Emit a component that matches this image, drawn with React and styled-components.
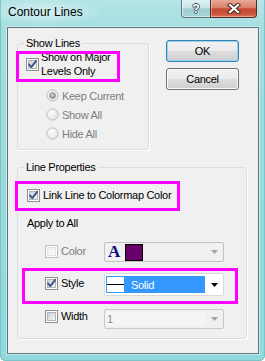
import React, { useId } from 'react';
import styled, { createGlobalStyle, css } from 'styled-components';

const FONT = `"Liberation Sans", Arial, sans-serif`;

const GlobalStyle = createGlobalStyle`
  html, body { margin: 0; padding: 0; background: #ffffff; }
  body { font-family: ${FONT}; font-size: 11px; color: #000; }
`;

const Window = styled.div`
  width: 265px;
  height: 361px;
  box-sizing: border-box;
  display: flex;
  flex-direction: column;
  border-radius: 0 0 6px 6px;
  overflow: hidden;
  background: linear-gradient(180deg, #b4e4e6 0px, #a5dee1 30px, #98dadd 200px, #8fd9dc 100%);
  box-shadow: inset 1px 0 0 #7cc3c7, inset -1px 0 0 #7cc3c7, inset 0 -1px 0 #7cc3c7;
`;

const TitleBar = styled.div`
  height: 27px;
  flex-shrink: 0;
  display: flex;
  align-items: flex-start;
  background: radial-gradient(ellipse 60px 13px at 44px 12px, rgba(255, 255, 255, 0.5), rgba(255, 255, 255, 0) 100%);
`;

const Title = styled.div`
  flex: 1;
  padding: 5px 0 0 8px;
  font-family: ${FONT};
  font-size: 12px;
  line-height: 15px;
  color: #000;
`;

const CaptionButtons = styled.div`
  display: flex;
  margin-right: 8px;
`;

const HelpButton = styled.div`
  width: 29px;
  height: 18px;
  box-sizing: border-box;
  border: 1px solid #58787b;
  border-top: none;
  border-right: none;
  border-radius: 0 0 0 4px;
  background: linear-gradient(180deg, #e0f1f2 0%, #c9e6e8 45%, #9fcfd2 52%, #a9d6d8 100%);
  box-shadow: inset 1px 0 0 rgba(255, 255, 255, 0.6), inset 0 -1px 0 rgba(255, 255, 255, 0.45);
  display: flex;
  align-items: center;
  justify-content: center;
  color: #fff;
  font-family: ${FONT};
  font-weight: bold;
  font-size: 12px;
  line-height: 12px;
  text-shadow: 1px 0 0 #3f5456, -1px 0 0 #3f5456, 0 1px 0 #3f5456, 0 -1px 0 #3f5456;
`;

const CloseButton = styled.div`
  width: 47px;
  height: 18px;
  box-sizing: border-box;
  border: 1px solid #5c2a22;
  border-top: none;
  border-radius: 0 0 4px 0;
  background: linear-gradient(180deg, #e9a998 0%, #d8806c 45%, #c44a34 52%, #c9533b 80%, #d7745a 100%);
  box-shadow: inset 1px 0 0 rgba(255, 255, 255, 0.35), inset 0 -1px 0 rgba(255, 255, 255, 0.35);
  display: flex;
  align-items: center;
  justify-content: center;
`;

const Client = styled.div`
  flex: 1;
  margin: 0 6px 7px 7px;
  border: 1px solid #5d7579;
  background: #f0f0f0;
  box-sizing: border-box;
  padding: 9px 0 0 9px;
  display: flex;
  flex-direction: column;
  box-shadow: 0 0 0 1px rgba(255, 255, 255, 0.45);
`;

const TopRow = styled.div`
  display: flex;
  align-items: flex-start;
`;

const Group = styled.fieldset`
  margin: ${(p) => p.$mt || 0}px 0 0 0;
  padding: 0 0 ${(p) => p.$pb}px 0;
  min-inline-size: 0;
  width: ${(p) => p.$w}px;
  box-sizing: border-box;
  border: 1px solid #d5dfe5;
  border-radius: 3px;
  box-shadow: 1px 1px 0 #ffffff;
  display: flex;
  flex-direction: column;
`;

const Legend = styled.legend`
  margin-left: 6px;
  padding: 0 2px;
  font-size: 11px;
  line-height: 13px;
  letter-spacing: -0.3px;
  color: #000;
`;

/* magenta annotation frame drawn over a row */
const annotation = css`
  position: relative;
  ${(p) =>
    p.$box &&
    css`
      &::after {
        content: '';
        position: absolute;
        top: ${p.$box[0]}px;
        left: ${p.$box[1]}px;
        width: ${p.$box[2]}px;
        height: ${p.$box[3]}px;
        border: 3px solid #ff00ff;
        box-sizing: border-box;
        pointer-events: none;
      }
    `}
`;

const CheckRow = styled.div`
  ${annotation}
  display: flex;
  align-items: center;
  margin-top: ${(p) => p.$mt}px;
  padding-left: ${(p) => p.$pl}px;
  gap: ${(p) => p.$gap}px;
`;

const Text = styled.span`
  font-size: 11px;
  line-height: 14px;
  letter-spacing: -0.3px;
  color: ${(p) => (p.$disabled ? '#7d7d7d' : '#000')};
  max-width: ${(p) => (p.$wrap ? `${p.$wrap}px` : 'none')};
  white-space: ${(p) => (p.$wrap ? 'normal' : 'nowrap')};
`;

const RadioList = styled.div`
  display: flex;
  flex-direction: column;
  margin-top: 8px;
  padding-left: 28px;
`;

const RadioRow = styled.div`
  display: flex;
  align-items: center;
  height: 19px;
  gap: 3px;
`;

const ButtonColumn = styled.div`
  display: flex;
  flex-direction: column;
  gap: 6px;
  margin: 3px 0 0 17px;
`;

const Button = styled.button`
  width: 73px;
  height: 22px;
  box-sizing: border-box;
  padding: 0;
  font-family: ${FONT};
  font-size: 11px;
  letter-spacing: -0.3px;
  color: #000;
  border: 1px solid ${(p) => (p.$default ? '#3c7fb1' : '#707070')};
  border-radius: 3px;
  background: linear-gradient(180deg, #f2f2f2 0%, #ebebeb 48%, #dddddd 52%, #cfcfcf 100%);
  box-shadow: inset 0 0 0 1px ${(p) => (p.$default ? '#8fd6f5' : '#fcfcfc')};
`;

const PlainRow = styled.div`
  margin-top: ${(p) => p.$mt}px;
  padding-left: ${(p) => p.$pl}px;
  display: flex;
  align-items: center;
  height: 14px;
`;

const SettingRow = styled.div`
  ${annotation}
  display: grid;
  grid-template-columns: 59px 120px;
  align-items: start;
  margin-top: ${(p) => p.$mt}px;
  padding-left: 27px;
`;

const SettingLabel = styled.div`
  display: flex;
  align-items: center;
  gap: 3px;
  height: 14px;
  margin-top: ${(p) => p.$top}px;
`;

const Combo = styled.div`
  width: 120px;
  height: ${(p) => p.$h}px;
  box-sizing: border-box;
  border: 1px solid ${(p) => p.$border};
  border-radius: 2px;
  background: ${(p) => p.$bg};
  padding: 2px 0 2px 1px;
  display: flex;
  align-items: stretch;
`;

const ComboValue = styled.div`
  width: 99px;
  display: flex;
  align-items: center;
  background: ${(p) => p.$bg || 'transparent'};
  color: ${(p) => p.$color || '#000'};
`;

const ComboArrow = styled.div`
  flex: 1;
  display: flex;
  align-items: center;
  justify-content: center;
`;

const FontGlyph = styled.span`
  display: inline-block;
  width: 15px;
  margin-left: 2px;
  font-family: "Liberation Serif", "Times New Roman", serif;
  font-weight: bold;
  font-size: 17px;
  line-height: 16px;
  color: #0a0a80;
`;

const Swatch = styled.span`
  width: 18px;
  height: 17px;
  box-sizing: border-box;
  margin-left: 2px;
  border: 1px solid #000;
  background: ${(p) => p.$color};
`;

const LineSample = styled.span`
  width: 17px;
  height: 15px;
  margin-left: 1px;
  background: #fff;
  display: flex;
  align-items: center;
  &::before {
    content: '';
    flex: 1;
    height: 1px;
    background: #000;
  }
`;

const ValueText = styled.span`
  font-size: 11px;
  line-height: 14px;
  letter-spacing: -0.3px;
  margin-left: ${(p) => p.$ml}px;
`;

function CheckBox({ checked, disabled }) {
  const id = 'cb' + useId().replace(/[^a-zA-Z0-9]/g, '');
  return (
    <svg width="13" height="13" viewBox="0 0 13 13" style={{ flexShrink: 0 }}>
      <defs>
        <linearGradient id={id} x1="0" y1="0" x2="1" y2="1">
          <stop offset="0" stopColor={disabled ? '#ececec' : '#c9cdd3'} />
          <stop offset="1" stopColor={disabled ? '#fbfbfb' : '#f8f8f8'} />
        </linearGradient>
      </defs>
      <rect x="0.5" y="0.5" width="12" height="12" fill="#fff" stroke={disabled ? '#bdbdbd' : '#8e8f8f'} />
      <rect x="2.5" y="2.5" width="8" height="8" fill={`url(#${id})`} stroke={disabled ? '#e3e3e3' : '#b2b6bc'} />
      {checked && (
        <path
          d="M3 6.4 L5.3 9.1 L10.2 2.8"
          fill="none"
          stroke="#3e5487"
          strokeWidth="1.9"
          strokeLinecap="round"
          strokeLinejoin="round"
        />
      )}
    </svg>
  );
}

function Radio({ selected }) {
  const id = 'rd' + useId().replace(/[^a-zA-Z0-9]/g, '');
  return (
    <svg width="13" height="13" viewBox="0 0 13 13" style={{ flexShrink: 0 }}>
      <defs>
        <radialGradient id={id} cx="0.4" cy="0.35" r="0.7">
          <stop offset="0" stopColor="#fdfdfd" />
          <stop offset="1" stopColor="#e2e2e2" />
        </radialGradient>
        <radialGradient id={id + 'd'} cx="0.45" cy="0.4" r="0.6">
          <stop offset="0" stopColor="#d6d6d6" />
          <stop offset="1" stopColor="#8d8d8d" />
        </radialGradient>
      </defs>
      <circle cx="6.5" cy="6.5" r="5.6" fill={`url(#${id})`} stroke="#bcbcbc" />
      {selected && <circle cx="6.5" cy="6.5" r="3" fill={`url(#${id}d)`} stroke="#8a8a8a" strokeWidth="0.8" />}
    </svg>
  );
}

function Arrow({ color }) {
  return (
    <svg width="7" height="4" viewBox="0 0 7 4">
      <path d="M0 0 H7 L3.5 4 Z" fill={color} />
    </svg>
  );
}

function CloseGlyph() {
  return (
    <svg width="14" height="11" viewBox="0 0 14 11">
      <path d="M3 2 L11 9 M11 2 L3 9" stroke="#4a231c" strokeWidth="4.2" strokeLinecap="square" />
      <path d="M3 2 L11 9 M11 2 L3 9" stroke="#ffffff" strokeWidth="2.3" strokeLinecap="square" />
    </svg>
  );
}

export default function App() {
  return (
    <>
      <GlobalStyle />
      <Window>
        <TitleBar>
          <Title>Contour Lines</Title>
          <CaptionButtons>
            <HelpButton>?</HelpButton>
            <CloseButton>
              <CloseGlyph />
            </CloseButton>
          </CaptionButtons>
        </TitleBar>
        <Client>
          <TopRow>
            <Group $w={132} $pb={6}>
              <Legend>Show Lines</Legend>
              <CheckRow $mt={0} $pl={8} $gap={2} $box={[1, -2, 104, 31]}>
                <CheckBox checked />
                <Text $wrap={80}>Show on Major Levels Only</Text>
              </CheckRow>
              <RadioList>
                <RadioRow>
                  <Radio selected />
                  <Text $disabled>Keep Current</Text>
                </RadioRow>
                <RadioRow>
                  <Radio />
                  <Text $disabled>Show All</Text>
                </RadioRow>
                <RadioRow>
                  <Radio />
                  <Text $disabled>Hide All</Text>
                </RadioRow>
              </RadioList>
            </Group>
            <ButtonColumn>
              <Button $default>OK</Button>
              <Button>Cancel</Button>
            </ButtonColumn>
          </TopRow>

          <Group $w={230} $pb={9} $mt={11}>
            <Legend>Line Properties</Legend>
            <CheckRow $mt={14} $pl={9} $gap={3} $box={[-7, -3, 165, 30]}>
              <CheckBox checked />
              <Text>Link Line to Colormap Color</Text>
            </CheckRow>
            <PlainRow $mt={14} $pl={9}>
              <Text>Apply to All</Text>
            </PlainRow>

            <SettingRow $mt={12}>
              <SettingLabel $top={2}>
                <CheckBox disabled />
                <Text $disabled>Color</Text>
              </SettingLabel>
              <Combo $h={20} $border="#c2c2c2" $bg="#f0f0f0">
                <ComboValue>
                  <FontGlyph>A</FontGlyph>
                  <Swatch $color="#690069" />
                </ComboValue>
                <ComboArrow>
                  <Arrow color="#a3a3a3" />
                </ComboArrow>
              </Combo>
            </SettingRow>

            <SettingRow $mt={11} $box={[-5, 4, 216, 36]}>
              <SettingLabel $top={3}>
                <CheckBox checked />
                <Text>Style</Text>
              </SettingLabel>
              <Combo $h={23} $border="#d9d9d9" $bg="#ffffff">
                <ComboValue $bg="#3399ff" $color="#ffffff">
                  <LineSample />
                  <ValueText $ml={7}>Solid</ValueText>
                </ComboValue>
                <ComboArrow>
                  <Arrow color="#000000" />
                </ComboArrow>
              </Combo>
            </SettingRow>

            <SettingRow $mt={13}>
              <SettingLabel $top={0}>
                <CheckBox />
                <Text>Width</Text>
              </SettingLabel>
              <Combo $h={20} $border="#c9c9c9" $bg="#f0f0f0">
                <ComboValue $bg="#f5f5f5" $color="#8a8a8a">
                  <ValueText $ml={1}>1</ValueText>
                </ComboValue>
                <ComboArrow>
                  <Arrow color="#a3a3a3" />
                </ComboArrow>
              </Combo>
            </SettingRow>
          </Group>
        </Client>
      </Window>
    </>
  );
}
